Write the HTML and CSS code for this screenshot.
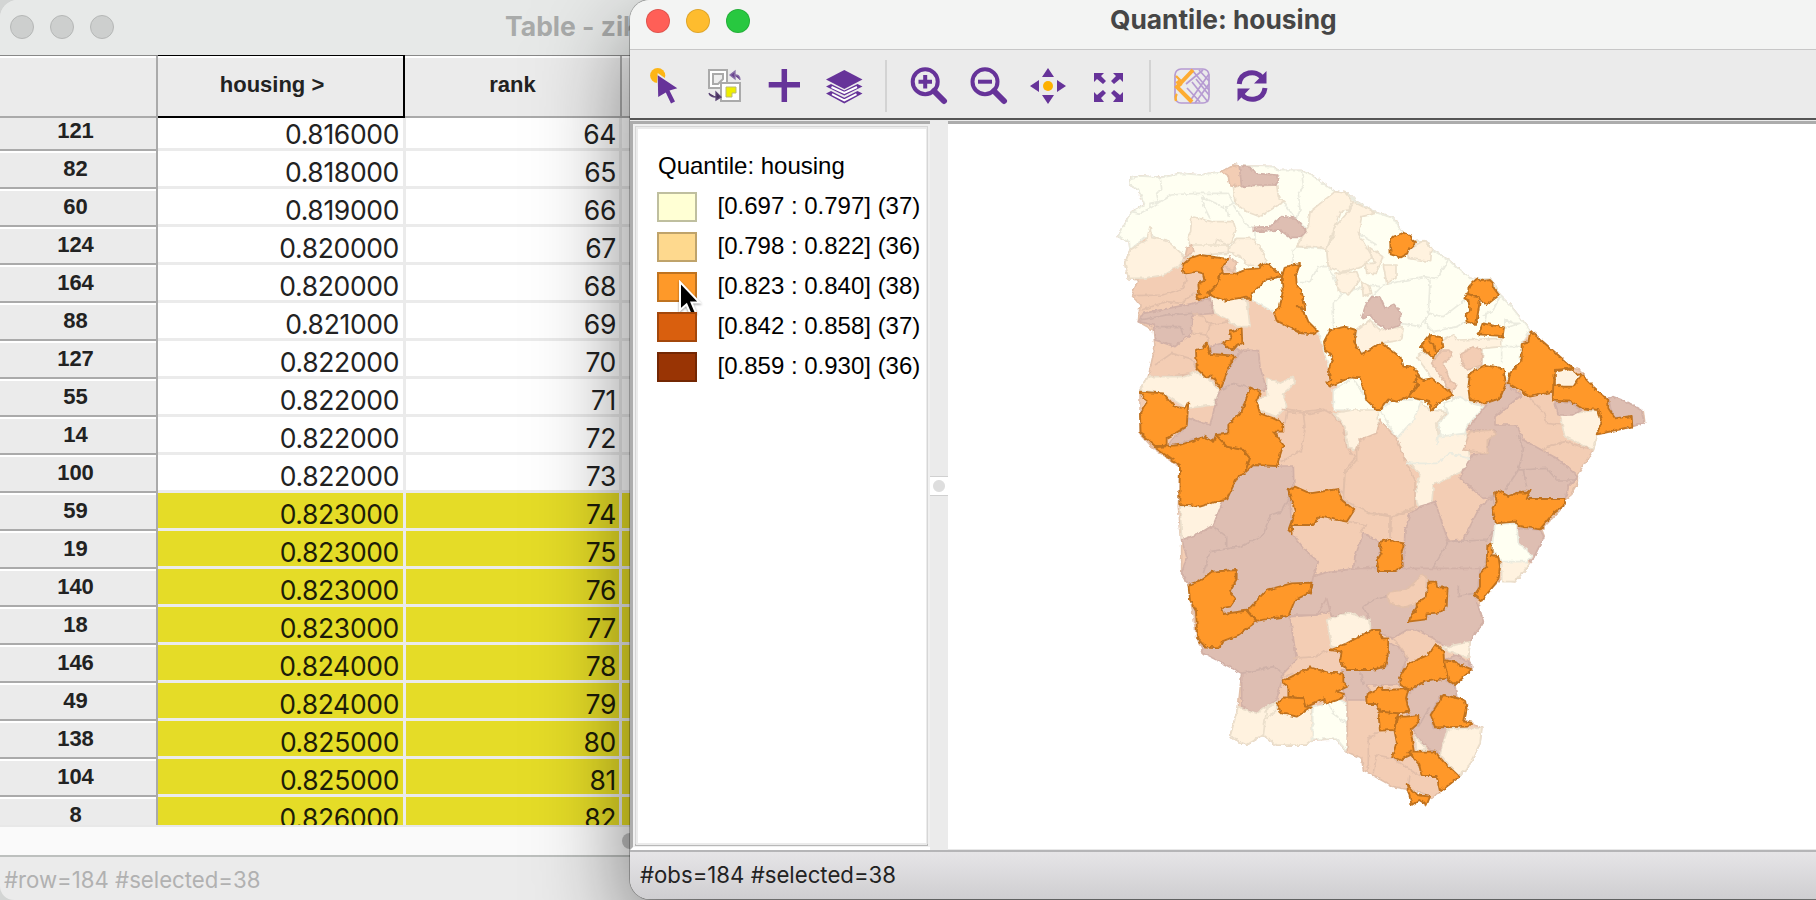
FILE: index.html
```html
<!DOCTYPE html>
<html lang="en">
<head>
<meta charset="utf-8">
<title>Quantile: housing</title>
<link rel="stylesheet" href="styles.css">
</head>
<body>
<div class="desktop">
<section class="win table-win">
  <header class="titlebar"><div class="lights"><i></i><i></i><i></i></div><h1 class="title">Table - zika</h1></header>
  <div class="row head"><div class="rh"></div><div class="c1">housing &gt;</div><div class="c2">rank</div><div class="c3"></div></div>
  <div class="rows">
    <div class="row"><div class="rh">121</div><div class="c1">0.816000</div><div class="c2">64</div><div class="c3"></div></div>
    <div class="row"><div class="rh">82</div><div class="c1">0.818000</div><div class="c2">65</div><div class="c3"></div></div>
    <div class="row"><div class="rh">60</div><div class="c1">0.819000</div><div class="c2">66</div><div class="c3"></div></div>
    <div class="row"><div class="rh">124</div><div class="c1">0.820000</div><div class="c2">67</div><div class="c3"></div></div>
    <div class="row"><div class="rh">164</div><div class="c1">0.820000</div><div class="c2">68</div><div class="c3"></div></div>
    <div class="row"><div class="rh">88</div><div class="c1">0.821000</div><div class="c2">69</div><div class="c3"></div></div>
    <div class="row"><div class="rh">127</div><div class="c1">0.822000</div><div class="c2">70</div><div class="c3"></div></div>
    <div class="row"><div class="rh">55</div><div class="c1">0.822000</div><div class="c2">71</div><div class="c3"></div></div>
    <div class="row"><div class="rh">14</div><div class="c1">0.822000</div><div class="c2">72</div><div class="c3"></div></div>
    <div class="row"><div class="rh">100</div><div class="c1">0.822000</div><div class="c2">73</div><div class="c3"></div></div>
    <div class="row sel"><div class="rh">59</div><div class="c1">0.823000</div><div class="c2">74</div><div class="c3"></div></div>
    <div class="row sel"><div class="rh">19</div><div class="c1">0.823000</div><div class="c2">75</div><div class="c3"></div></div>
    <div class="row sel"><div class="rh">140</div><div class="c1">0.823000</div><div class="c2">76</div><div class="c3"></div></div>
    <div class="row sel"><div class="rh">18</div><div class="c1">0.823000</div><div class="c2">77</div><div class="c3"></div></div>
    <div class="row sel"><div class="rh">146</div><div class="c1">0.824000</div><div class="c2">78</div><div class="c3"></div></div>
    <div class="row sel"><div class="rh">49</div><div class="c1">0.824000</div><div class="c2">79</div><div class="c3"></div></div>
    <div class="row sel"><div class="rh">138</div><div class="c1">0.825000</div><div class="c2">80</div><div class="c3"></div></div>
    <div class="row sel"><div class="rh">104</div><div class="c1">0.825000</div><div class="c2">81</div><div class="c3"></div></div>
    <div class="row sel"><div class="rh">8</div><div class="c1">0.826000</div><div class="c2">82</div><div class="c3"></div></div>
  </div>
  <div class="scroll"><span class="thumb"></span></div>
  <footer class="status">#row=184 #selected=38</footer>
</section>

<section class="win map-win">
  <header class="titlebar"><div class="lights"><i class="red"></i><i class="yellow"></i><i class="green"></i></div><h1 class="title">Quantile: housing</h1></header>
  <nav class="toolbar">
    <svg class="tool" viewBox="0 0 40 40"><circle cx="13.7" cy="9.5" r="7.6" fill="#fdb515"/><path d="M13.7 7L35 22L26 40L12 33Z" fill="#ebebeb"/><path d="M13.7 9.3L33.3 22.3L25.5 24.5L31 35.5L27 37.5L21.8 26.5L14.2 31Z" fill="#663399"/></svg>
    <svg class="tool" viewBox="0 0 40 40"><g fill="#fff" stroke="#aaa" stroke-width="2"><path d="M5 4H23V22H5Z"/><path d="M17 17H36V35H17Z"/><path d="M9 8H19V13L14 18H9Z" fill="#eee"/></g><path d="M22 21H32V27H28V31H22Z" fill="#ee0" stroke="#bb7" stroke-width="1"/><path d="M26 9L31 5V13ZM30 9Q36 8 36 14" fill="#6a4490" stroke="#8a70a8" stroke-width="1.3"/><path d="M12 26V34L17 31ZM12 31Q6 31 5 27" fill="#46305c" stroke="#5c4576" stroke-width="1.3"/></svg>
    <svg class="tool" viewBox="0 0 40 40"><path d="M20.3 3V36M4.7 18.7H36" stroke="#663399" stroke-width="5.5"/></svg>
    <svg class="tool" viewBox="0 0 40 40"><path d="M20.3 4L38.5 13.5L20.3 23L2 13.5Z" fill="#663399"/><path d="M2 20.5L7 18L20.3 24.5L33.5 18L38.5 20.5L20.3 29.5ZM2 27.5L7 25L20.3 31.8L33.5 25L38.5 27.5L20.3 37.500Z" fill="#663399"/><path d="M7.5 21L20.3 27L33 21M8 28.2L20.3 34.4L32.5 28.2" fill="none" stroke="#fff" stroke-width="2"/></svg>
    <span class="sep"></span>
    <svg class="tool" viewBox="0 0 40 40" fill="none" stroke="#663399"><circle cx="17.2" cy="15.7" r="12.5" stroke-width="4"/><path d="M26 25L36 35" stroke-width="6" stroke-linecap="round"/><path d="M10.5 15.7H24M17.2 9V22.5" stroke-width="4"/></svg>
    <svg class="tool" viewBox="0 0 40 40" fill="none" stroke="#663399"><circle cx="17" cy="15.7" r="12.5" stroke-width="4"/><path d="M26 25L36 35" stroke-width="6" stroke-linecap="round"/><path d="M10 15.7H24" stroke-width="4"/></svg>
    <svg class="tool" viewBox="0 0 40 40" fill="#663399"><path d="M20 2L26 11H14ZM20 38L26 29H14ZM2 20L11 14V26ZM38 20L29 14V26Z"/><circle cx="20" cy="20" r="5" fill="#fdb100"/></svg>
    <svg class="tool" viewBox="0 0 40 40" fill="#663399"><path d="M6 7H16L13 10L18 15L15 18L9 13L6 16ZM35 7V16L32 13L26 18L23 15L28 10L25 7ZM6 36V26L9 29L15 24L18 27L13 32L16 36ZM35 36H25L28 32L23 27L26 24L32 29L35 26Z"/></svg>
    <span class="sep"></span>
    <svg class="tool" viewBox="0 0 40 40" fill="none" stroke="#b69bd2" stroke-width="1.7"><rect x="3" y="3" width="34" height="34" rx="6"/><path d="M18 35L37 8M23 37L37 18M20 16L36 36M24 13L37 29M20 4L37 24M27 4L37 15M15 22L28 36M14 18L31 4"/><path d="M21 4L5 21L20 36M5 15L9 20" stroke="#fdac32" stroke-width="4"/><path d="M5 28Q3 30 4 35M4 10L9 15" stroke="#fdac32" stroke-width="2.4"/></svg>
    <svg class="tool" viewBox="0 0 40 40" fill="none" stroke="#663399" stroke-width="5"><path d="M7.2 18C8.5 5.5 24 3.5 30 11.5M33 22C31.5 34.5 16 36.5 10 28.5"/><path d="M34.5 5V17.5H22ZM5.5 35.500V22.500H18Z" fill="#663399" stroke="none"/></svg>
  </nav>
  <div class="body">
    <aside class="legend">
      <h2>Quantile: housing</h2>
      <ul>
        <li><i class="sw s1"></i>[0.697 : 0.797] (37)</li>
        <li><i class="sw s2"></i>[0.798 : 0.822] (36)</li>
        <li><i class="sw s3"><svg class="cursor" viewBox="0 0 26 38"><path d="M3 2V30L9.500 24.500L14 35L19 33L14.500 22.500H22.500Z" fill="#000" stroke="#fff" stroke-width="2"/></svg></i>[0.823 : 0.840] (38)</li>
        <li><i class="sw s4"></i>[0.842 : 0.858] (37)</li>
        <li><i class="sw s5"></i>[0.859 : 0.930] (36)</li>
      </ul>
    </aside>
    <div class="sash"><span class="grip"></span></div>
    <div class="canvas">
      <svg class="map" viewBox="948 125 868 725">
        <defs><filter id="coast" x="-5%" y="-5%" width="110%" height="110%" color-interpolation-filters="sRGB"><feTurbulence type="fractalNoise" baseFrequency=".07" numOctaves="2" seed="4"/><feDisplacementMap in="SourceGraphic" scale="12" xChannelSelector="R" yChannelSelector="G"/></filter></defs>
        <g transform="translate(1100 150) scale(.33333)"><g class="regions" filter="url(#coast)">
          <path class="peach" d="M90 85L120 78L185 82L245 70L300 75L365 65L400 45L420 48L520 50L535 62L605 62L635 75L700 122L745 130L765 152L830 188L880 205L905 245L945 275L975 273L998 300L1045 330L1110 385L1175 388L1200 437L1230 465L1290 540L1420 655L1440 660L1480 715L1525 745L1580 755L1630 785L1634 818L1597 830L1490 855L1480 900L1435 970L1435 995L1405 1045L1395 1050L1390 1070L1325 1138L1332 1157L1295 1235L1245 1295L1200 1290L1140 1350L1135 1370L1150 1415L1110 1475L1105 1525L1115 1560L1065 1605L1070 1640L1100 1665L1095 1710L1145 1735L1140 1780L1100 1860L1075 1880L1015 1930L995 1945L960 1925L880 1910L790 1860L785 1825L740 1805L710 1767L635 1770L620 1785L530 1785L490 1755L440 1785L390 1760L415 1670L425 1570L415 1540L310 1510L290 1460L265 1305L245 1270L245 1170L235 1070L240 950L160 895L120 850L120 720L145 680L165 590L160 540L115 515L120 465L95 435L115 390L85 385L75 340L90 300L88 275L55 260L95 185L135 165L115 120L90 105Z"/>
          <path class="pale" d="M90 85L120 78L185 82L245 70L300 75L365 65L400 45L420 48L520 50L535 62L605 62L635 75L700 122L745 130L765 152L830 188L880 205L905 245L945 275L975 273L998 300L1045 330L1110 385L1175 388L1200 437L1230 465L1290 540L1265 580L1260 640L1225 680L1190 720L1100 770L900 820L700 700L655 545L520 485L455 450L400 350L255 320L150 250L90 300L88 275L55 260L95 185L135 165L115 120L90 105Z"/>
          <path class="line" d="M180 82L185 115L170 130L175 155L150 160L150 175L120 190L95 185M150 175L210 135L290 130L385 130L400 160L380 170L385 200M305 140L315 175L330 205M305 140L370 170L390 200M400 165L440 225L465 235M605 65L610 110L595 130L600 180L590 210L545 150M620 235L590 215M465 245L465 265M578 370L580 300L590 290L680 297L685 350L655 350L630 395L600 395M685 350L725 435L700 460L700 540M725 435L800 405L840 410M780 200L775 250L830 285M815 440L850 405L970 380L990 395L985 490L1030 500L1095 450M985 490L960 530L900 520M970 380L1010 385L1045 330M985 490L975 520L1000 545L1070 530L1120 500M1150 500L1180 480L1200 440M1160 485L1155 520L1140 540M1265 590L1205 590L1205 640M1240 520L1215 510L1215 535L1260 520L1240 520"/>
          <g class="light">
            <path d="M85 385L75 340L90 300L140 270L150 230L155 260L200 270L255 320L240 345L190 375L130 385Z"/>
            <path d="M275 200L335 215L400 215L408 240L395 275L385 285L270 285L262 262L272 245ZM270 285L345 285L350 268L385 285L385 310L300 315L255 322L280 300Z"/>
            <path d="M390 290L410 265L460 265L490 305L498 330L480 348L440 345L425 320L385 308ZM400 110L465 108L530 105L535 140L555 155L535 165L480 200L440 185L405 160Z"/>
            <path d="M590 290L625 230L630 185L705 125L740 130L760 155L745 180L720 185L705 230L700 260L680 297L640 290ZM760 155L828 190L785 200L775 250L815 320L790 350L750 360L720 365L685 350L680 297L705 230L750 180ZM330 445L440 445L450 530L410 530L385 510L345 490ZM705 370L770 365L780 390L745 435L715 420Z"/>
            <path d="M770 540L810 510L840 540L910 530L905 570L840 580L790 610L765 590ZM920 300L970 272L995 295L992 335L925 325ZM850 345L888 345L888 385L860 400ZM795 340L825 340L805 290L848 320L830 370L800 370ZM785 395L810 410L815 430L790 440Z"/>
            <path d="M950 620L970 605L1000 620L1030 570L1060 555L1075 570L1205 565L1205 590L1150 595L1145 640L1105 680L1110 765L1065 750L1000 690Z"/>
          </g>
          <path class="peach" d="M365 65L400 45L418 48L425 108L390 105L385 80ZM255 322L262 290L275 285L282 305ZM370 350L390 320L410 340L400 362ZM995 640L1025 600L1050 600L1055 620L1030 640L1050 690L1070 705L1055 735L1030 690ZM1085 610L1120 590L1145 600L1145 645L1100 660L1085 640Z"/>
          <g class="mauve"><path d="M418 48L450 52L465 70L530 75L535 95L525 105L470 105L425 110ZM460 245L460 232L510 230L545 200L590 205L618 245L600 262L570 262L540 240ZM785 505L800 460L815 440L840 442L855 475L882 463L902 490L900 525L860 540L830 520L810 495Z"/><path d="M115 515L130 490L280 460L330 445L340 490L275 495L275 550L225 590L165 570L160 525ZM330 590L365 580L430 605L405 618L330 615Z"/></g>
          <path class="mline" d="M120 510L200 495L275 490M165 530L240 530L250 555"/>
          <path class="pline" d="M100 437L190 435L250 415L260 385L250 345M125 480L200 455L245 460L280 430L330 435M275 550L320 555L330 525L385 515M320 555L330 590M275 490L310 500L330 525M165 645L215 610L270 625L290 655M145 680L200 680L290 670M680 780L630 790L560 785L555 820"/>
          <g transform="translate(60 660)">
            <path class="light" d="M60 60L85 20L190 20L230 5L265 25L300 60L280 105L200 115L130 70ZM440 25L480 40L520 20L525 40L490 70L500 110L470 140L415 120L410 95L440 75ZM180 410L310 390L280 470L240 490L185 510Z"/>
            <path class="mauve" d="M140 230L160 205L200 170L205 145L270 165L290 90L300 60L320 0L370 -60L415 -58L420 -10L440 60L385 65L365 130L330 190L285 195L280 215L255 200Z"/>
            <path class="mauve" d="M185 510L240 490L280 465L310 390L350 325L400 288L520 288L522 355L510 380L515 490L560 545L595 575L580 620L625 605L780 590L780 515L730 490L705 560L700 600L720 620L640 720L590 735L510 740L530 870L490 910L470 990L410 1030L365 1010L365 910L290 870L250 850L210 650L185 610L200 560Z"/>
            <path class="mline" d="M300 60L340 40L385 52M510 380L485 425L450 435L430 495L360 530L270 545L250 610M280 470L320 500L320 535M510 740L485 650M365 910L460 890L490 910"/>
            <path class="pline" d="M485 115L550 125L555 175L545 240L485 275M550 125L610 118L640 135L670 170L680 230L705 265L675 300L670 370L660 360M670 370L740 400L810 420L810 500M810 420L840 420M685 455L740 465L720 490M525 465L600 440"/>
          </g>
          <g transform="translate(840 660)">
            <path class="pale" d="M-140 60L-80 25L-40 90L0 120L40 90L125 90L50 205L0 200L-60 120L-140 120Z"/>
            <path class="light" d="M-140 130L-80 120L-5 120L-5 200L-60 210L-70 240L-95 235L-105 170ZM50 205L120 95L150 120L200 125L170 160L175 195L260 190L270 270L245 305L160 345L155 405L115 410L105 375L120 310L75 270Z"/>
            <path class="pale" d="M0 120L40 90L125 90L100 150L50 205Z"/>
            <path class="peach" d="M0 150L50 205L75 270L105 330L105 410L35 440L-30 430L-110 390L-105 310L-70 270L-70 240L-60 210L-10 190Z"/>
            <path class="pale" d="M175 160L205 130L190 100L240 80L275 100L310 110L260 170L255 190L180 200Z"/>
            <path class="mauve" d="M90 430L120 410L165 395L205 515L250 510L300 410L340 380L348 460L340 490L330 520L300 640L280 720L-100 720L-120 620L-60 600L70 600L75 480Z"/>
            <path class="mauve" d="M260 180L300 130L345 75L375 40L425 75L345 140L345 165L410 165L430 210L530 265L595 320L565 350L555 390L350 380L310 385L240 325L275 255L320 250L330 205L345 180Z"/>
            <path class="peach" d="M270 185L340 180L345 195L322 210L322 250L250 240Z"/>
            <path class="mline" d="M415 195L430 240L415 300L500 295L530 330L595 330M415 300L375 360M430 300L440 350M205 515L150 610L60 600M205 515L320 510L340 480M130 615L80 640L20 655M210 650L260 650L290 680"/>
            <path class="pline" d="M450 85L490 125L500 160L550 165M490 245L500 230L555 215L640 240M-5 430L35 440L100 420M35 440L30 500"/>
            <path class="line" d="M75 280L170 280L210 250L270 265M175 195L170 225"/>
            <path class="light" d="M540 135L660 120L665 150L640 240L555 200ZM365 575L410 560L450 580L405 635L365 635Z"/>
            <path class="mauve" d="M525 95L575 100L605 120L580 135L535 135ZM685 85L700 80L740 95L785 120L792 160L757 168L757 140L700 143ZM410 475L480 480L492 500L455 575L415 520Z"/>
            <path class="pale" d="M345 462L410 460L415 520L455 555L440 575L365 575L335 540Z"/>
          </g>
          <g transform="translate(180 1260)">
            <path class="mauve" d="M460 20L505 5L600 -5L960 -5L950 95L970 155L930 215L860 235L820 205L770 180L740 180L700 205L632 180L630 155L565 128L515 140L500 85L470 135L390 135L385 100L450 60Z"/>
            <path class="mauve" d="M680 215L720 235L740 265L720 320L725 345L620 345L640 375L620 390L560 390L540 330L545 300L680 290ZM740 375L790 335L850 325L885 350L890 385L840 380L810 435L820 475L868 475L840 550L810 540L770 500L740 430ZM850 270L890 255L935 285L935 300Z"/>
            <path class="peach" d="M680 80L690 65L740 60L785 15L800 20L798 80L770 100L730 112L690 100Z"/>
            <path class="mline" d="M630 155L610 110L640 90L680 80M895 45L895 80L940 70M600 300L610 345M775 470L810 410"/>
            <path class="light" d="M500 150L565 128L630 150L632 180L540 235L515 230ZM235 410L290 430L320 410L350 395L350 420L315 450L310 495L260 525L210 500ZM320 415L350 400L400 440L455 410L458 510L440 525L350 525L310 495ZM840 235L930 215L925 265L860 240ZM865 475L965 475L960 520L920 600L895 618L838 550ZM765 495L800 540L770 540Z"/>
            <path class="pale" d="M458 410L500 400L530 385L560 400L562 545L530 507L458 507Z"/>
            <path class="line" d="M505 400L525 435L560 460"/>
            <path class="pline" d="M562 390L562 545M625 600L625 505L660 485M640 610L650 555L700 565L780 620M745 650L750 615M398 265L470 260L500 240M370 320L400 310M700 205L745 265"/>
          </g>
          <g class="orange">
            <path d="M247 345L270 325L300 315L385 327L365 355L370 370L355 378L355 405L330 435L300 450L288 440L297 430L295 400L313 390L308 370L290 365L250 372Z"/>
            <path d="M360 372L410 370L440 358L475 355L490 340L510 345L545 380L500 388L455 430L452 452L440 440L375 452L340 440L325 430L350 405Z"/>
            <path d="M545 380L555 350L600 342L588 375L590 405L605 425L617 480L590 468L615 490L625 515L655 545L640 553L605 550L530 512L522 485L540 470L548 425Z"/>
            <path d="M672 575L690 540L735 530L768 540L762 575L785 612L845 578L880 605L905 625L910 650L940 652L960 680L940 695L955 700L925 740L890 755L865 748L840 780L830 780L800 750L780 685L750 682L690 710L678 700L692 690L685 660L700 620L675 600Z"/>
            <path d="M370 580L395 565L390 545L425 535L427 580L410 585L395 602Z"/>
            <path d="M288 600L310 595L320 578L330 612L405 617L385 650L380 670L362 718L335 675L320 685L290 655Z"/>
            <g transform="translate(810 0)"><path d="M60 265L98 248L120 255L135 280L115 300L112 310L90 322L62 313Z"/><path d="M305 400L320 387L330 393L360 390L370 400L372 415L387 435L350 465L320 440L290 435Z"/><path d="M283 445L290 432L325 442L330 450L318 525L290 515L287 500L300 480L295 450Z"/><path d="M338 520L402 532L398 560L380 557L325 553Z"/><path d="M152 590L180 555L215 562L220 590L200 607L190 625L170 605Z"/><path d="M180 558L178 575L190 582L195 605"/><path d="M482 543L610 655L555 660L550 725L480 740L415 700L420 670L455 630L455 580L475 575Z"/><path d="M300 670L345 645L400 655L408 700L390 745L345 760L300 750L295 715Z"/></g>
            <g transform="translate(840 660)"><path d="M105 15L130 30L155 25L220 75L180 95L155 122L145 95L85 80L115 45Z"/><path d="M520 45L560 50L600 10L640 50L685 90L685 115L705 145L755 138L757 170L650 193L665 155L655 120L605 115L575 95L518 92Z"/><path d="M345 368L355 362L385 378L415 368L440 368L452 358L440 387L557 387L548 410L515 435L480 478L415 468L405 455L348 460L337 415L350 395Z"/><path d="M322 525L335 518L335 555L355 558L360 590L355 630L305 692L283 675L300 650L300 610L320 590Z"/><path d="M2 515L25 508L42 515L72 520L65 545L68 590L45 603L-3 603L-10 572L5 548L0 530Z"/></g>
            <g transform="translate(60 660)"><path d="M60 65L130 70L165 110L195 115L205 95L200 170L140 205L140 228L105 228L62 190L60 135L80 95Z"/><path d="M103 232L180 225L255 200L280 215L288 195L320 230L370 240L390 265L375 308L350 325L322 385L240 410L178 402L180 285Z"/><path d="M390 52L420 65L410 95L420 130L460 145L490 160L490 185L460 185L490 225L470 288L400 285L375 308L390 265L370 240L320 230L290 195L325 190L325 165L365 125Z"/><path d="M505 360L525 350L570 370L655 357L665 390L703 420L680 455L600 440L580 465L515 465L518 492L505 480L525 425Z"/></g>
            <g transform="translate(180 1260)"><path d="M805 35L828 35L832 52L863 52L860 110L840 128L800 130L798 148L745 155L770 115L770 98L800 80Z"/><path d="M85 45L115 35L155 5L230 0L230 30L210 65L228 85L210 110L183 115L190 132L260 122L288 155L235 195L185 215L180 232L135 230L112 205L108 120L90 90Z"/><path d="M262 122L320 60L395 40L455 38L450 68L405 90L385 138L290 152Z"/><path d="M510 240L560 220L635 180L660 180L665 205L685 205L683 260L675 290L635 300L560 300L540 275L545 245Z"/><path d="M365 335L450 292L505 308L550 310L550 335L562 350L530 365L552 372L545 385L495 402L490 385L435 410L430 385L385 380L385 350Z"/><path d="M350 400L375 382L430 385L435 410L455 412L410 440L365 430Z"/><path d="M720 320L745 280L805 255L828 222L850 245L852 270L865 325L795 335L745 360L722 345Z"/><path d="M852 270L880 275L935 298L885 345L865 330Z"/><path d="M618 375L665 350L670 360L745 357L738 385L748 425L715 430L660 425L650 402L620 402Z"/><path d="M655 425L715 430L703 480L660 482Z"/><path d="M712 440L740 440L775 435L775 460L752 480L762 550L720 570L697 560L710 515L703 480Z"/><path d="M745 545L825 545L850 575L898 620L840 665L830 618L785 618L778 585Z"/><path d="M740 642L770 675L810 680L800 705L778 690L755 705Z"/><path d="M812 435L850 375L915 390L920 420L912 455L937 458L925 470L825 472Z"/></g>
          </g>
          <path class="light isle" d="M1365 665L1410 655L1440 680L1420 710L1390 710L1365 705Z"/>
        </g></g>
      </svg>
    </div>
  </div>
  <footer class="status">#obs=184 #selected=38</footer>
</section>
</div>
</body>
</html>
```
FILE: styles.css
```css
* { box-sizing: border-box; }
body { margin: 0; background: #d3d5d4; font-family: Inter, "Liberation Sans", sans-serif; }
.desktop { position: relative; width: 1816px; height: 900px; overflow: hidden; }
.win { display: flex; flex-direction: column; overflow: hidden; }
.title { margin: 0; font-size: 26.3px; line-height: 32px; font-weight: 700; white-space: nowrap; }
.lights { display: flex; }
.lights i { width: 24px; height: 24px; border-radius: 50%; border: 1px solid rgba(0,0,0,.12); }

.table-win { width: 900px; height: 900px; background: #ebebeb; border-radius: 18px 0 0 14px; }
.table-win .titlebar { flex: none; display: flex; height: 56px; padding: 10px 0 0 10px; background: #e7e9e8; border-bottom: 1px solid #888; }
.table-win .lights { gap: 16px; padding-top: 5px; }
.table-win .lights i { background: #cdcfce; border-color: #b5b7b6; }
.table-win .title { margin-left: 391px; color: #a9abaa; font-size: 26.5px; }
.row { display: grid; grid-template-columns: 158px 248px 216px 1fr; grid-template-rows: 100%; height: 38px; flex: none; }
.row > div { border-right: 3px solid #ebebeb; border-bottom: 3px solid #ebebeb; }
.row .rh { font: 700 22px/36px "Liberation Sans", sans-serif; color: #222; text-align: center; padding-right: 5px; background: #ebebeb; border-right: 2px solid #aaa; border-bottom: 2px solid #aaa; box-shadow: inset 0 2px #fff; }
.row .c1, .row .c2 { font-size: 26.500px; line-height: 42px; text-align: right; color: #222; white-space: nowrap; background: #fff; letter-spacing: -.35px; }
.row .c1 { padding-right: 4px; }
.row .c2 { padding-right: 3px; }
.row .c3 { background: #fff; }
.sel .c1, .sel .c2, .sel .c3 { background: #e5dc27; color: #1d1c08; }
.head { height: 62px; grid-template-columns: 158px 247px 217px 1fr; }
.row.head > div { background: #ebebeb; border-bottom: 2px solid #aaa; border-right: 2px solid #aaa; box-shadow: inset 0 2px #fff; font: 700 22px/57px "Liberation Sans", sans-serif; text-align: center; letter-spacing: 0; }
.row.head .c1 { border-color: #000; margin-top: -1px; border-top: 1px solid #000; padding-right: 17px; }
.row.head .c2 { padding-right: 0; }
.rows { height: 707px; overflow: hidden; display: flex; flex-direction: column; }
.rows .row:first-child { margin-top: -5px; }
.scroll { height: 30px; position: relative; background: #fafafa; border-top: 2px solid #e8e8e8; }
.thumb { position: absolute; left: 622px; top: 6px; width: 200px; height: 16px; border-radius: 8px; background: #c1c1c1; }
.table-win .status { height: 45px; border-top: 2px solid #bdc0be; padding-left: 4px; font-size: 22.2px; line-height: 45px; color: #b1b1b1; }

.map-win { position: absolute; left: 630px; top: 0; width: 1220px; height: 899px; background: #ebebeb; border-radius: 20px; box-shadow: 0 0 0 1px rgba(0,0,0,.25), 0 35px 95px rgba(0,0,0,.5); }
.map-win .titlebar { flex: none; height: 50px; display: flex; padding: 2px 0 0 16px; background: #f3f4f3; border-bottom: 1px solid #c7c7c7; }
.map-win .lights { gap: 16px; padding-top: 7px; }
.map-win .title { margin-left: 360px; padding-top: 2px; color: #464646; }
.red { background: #ff5f57; }
.yellow { background: #febc2e; }
.green { background: #28c840; }
.toolbar { flex: none; height: 70px; margin-bottom: 1px; padding: 3px 0 0 14px; display: flex; align-items: center; gap: 20px; border-bottom: 2px solid #555; }
.tool { flex: none; width: 40px; height: 40px; }
.sep { flex: none; width: 2px; height: 52px; background: #d3d3d3; margin: 0 1px; }
.body { height: 729px; display: flex; flex: none; }
.legend { width: 300px; border-top: 3px solid #acacac; border-left: 3px solid #acacac; border-bottom: 3px solid #fff; display: grid; align-content: start; background: linear-gradient(#fff, #fff) 5px 5px / 288px 714px no-repeat, linear-gradient(#ebebeb, #ebebeb) 3px 3px / 291px 718px no-repeat, linear-gradient(#b8b8b8, #b8b8b8) 2px 720px / 293px 2px no-repeat, linear-gradient(#d6d6d6, #d6d6d6) 2px 2px / 293px 719px no-repeat, #f0f0f0; font: 24px/40px "Liberation Sans", sans-serif; color: #000; }
.legend h2 { margin: 22px 0 0 25px; font: inherit; white-space: nowrap; }
.legend ul { list-style: none; margin: 0 0 0 24px; padding: 0; }
.legend li { display: flex; align-items: center; gap: 20.500px; height: 40px; white-space: nowrap; }
.sw { position: relative; width: 40px; height: 30px; margin-top: 2px; border: 2px solid; }
.s1 { background: #ffffd4; border-color: #bfbf9f; }
.s2 { background: #fed98e; border-color: #bfa36b; }
.s3 { background: #fe9929; border-color: #bf7320; }
.s4 { background: #d95f0e; border-color: #a3470b; }
.s5 { background: #993404; border-color: #732703; }
.cursor { position: absolute; left: 18px; top: 6px; width: 26px; height: 38px; filter: drop-shadow(0 1px 1px rgba(0,0,0,.4)); }
.sash { width: 18px; display: flex; align-items: center; }
.grip { width: 18px; height: 20px; border: solid #d0d0d0; border-width: 1px 0; background: radial-gradient(circle, #dedede 0 5.500px, #fff 6.500px); }
.canvas { flex: 1; background: #fff; border-top: 3px solid #acacac; border-bottom: 1px solid #e8e8e8; }
.map { display: block; width: 868px; height: 725px; margin-top: 1px; }
.regions { stroke-width: 5; stroke-linejoin: round; }
.peach { fill: #f3cdb4; stroke: #e2c0aa; }
.pale { fill: #fffff2; stroke: #ebebdf; }
.light { fill: #fff2df; stroke: #ebdfcc; }
.mauve { fill: #debeb2; stroke: #d2b1a7; }
.orange { fill: #ff9829; stroke: #c0721e; stroke-width: 5.500; }
.isle { stroke: #c0721e; }
.line { fill: none; stroke: #ebebdf; }
.pline { fill: none; stroke: #e2bfaa; }
.mline { fill: none; stroke: #cfb1a8; }
.map-win .status { flex: 1; border-top: 2px solid #b5b5b7; background: linear-gradient(#e6e5e7, #cfced1); padding-left: 10px; font-size: 22.2px; line-height: 46px; color: #222; }
```
